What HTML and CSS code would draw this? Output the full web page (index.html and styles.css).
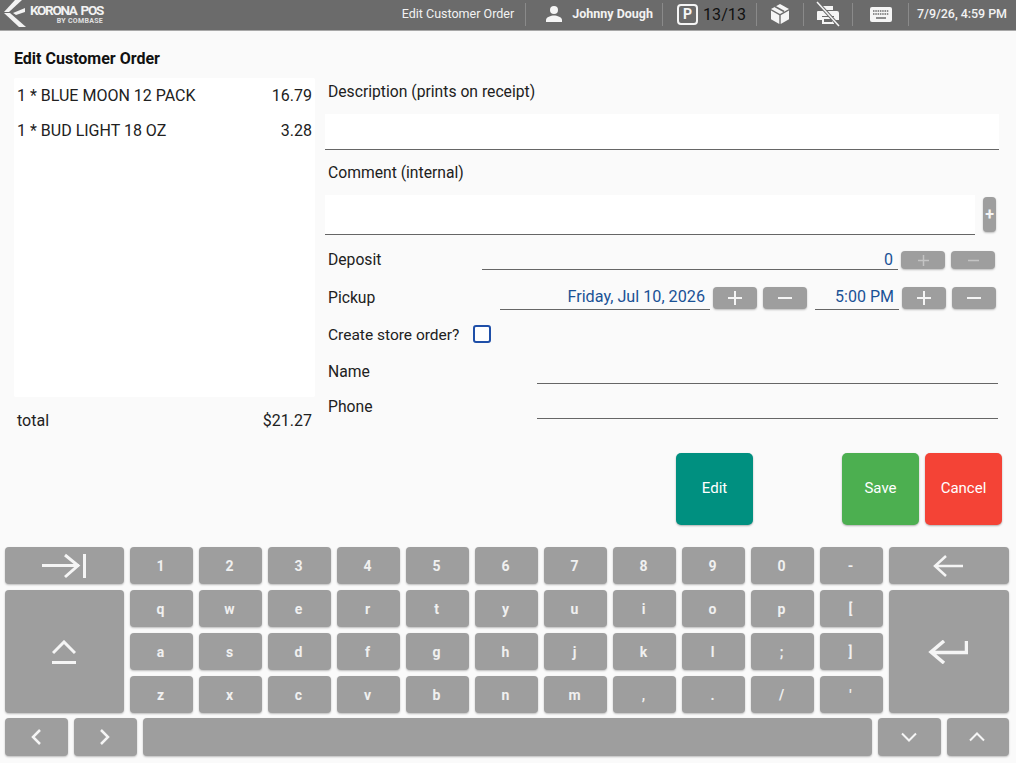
FILE: index.html
```html
<!DOCTYPE html>
<html lang="en">
<head>
<meta charset="utf-8">
<title>Edit Customer Order</title>
<link rel="stylesheet" href="styles.css">
</head>
<body>
<header class="topbar">
  <div class="logo">
    <svg class="logo-mark" width="28" height="28" viewBox="0 0 28 28"><path d="M15 0h7L9 12H4z" fill="#f2f2f2"/><path d="M4 13h6l16 14h-7z" fill="#f2f2f2"/><path d="M25 8v4l-9 3-3-2z" fill="#f2f2f2"/></svg>
    <div class="logo-text"><span class="logo-name">KORONA POS</span><span class="logo-sub">BY COMBASE</span></div>
  </div>
  <div class="top-items">
    <div class="top-item top-title"><span class="top-text">Edit Customer Order</span></div>
    <div class="top-item top-user">
      <svg width="18" height="18" viewBox="0 0 18 18"><circle cx="9" cy="5" r="4" fill="#f5f5f5"/><path d="M1 17v-2c0-3 5-4.500 8-4.500s8 1.500 8 4.500v2z" fill="#f5f5f5"/></svg>
      <span class="top-text user-name">Johnny Dough</span>
    </div>
    <div class="top-item top-park">
      <span class="park-icon">P</span>
      <span class="park-count">13/13</span>
    </div>
    <div class="top-item top-icon box-item">
      <svg width="20" height="22" viewBox="0 0 20 22"><path d="M10 1l9 5-9 5-9-5z" fill="#f5f5f5"/><path d="M1 7.500l8.300 4.700V21L1 16.300z" fill="#f5f5f5"/><path d="M10.700 12.200L19 7.500v8.800L10.700 21z" fill="#f5f5f5"/><path d="M5 3.500l9 5" stroke="#6b6b6b" stroke-width="1.500"/></svg>
    </div>
    <div class="top-item top-icon print-item">
      <svg width="24" height="26" viewBox="0 0 24 26"><path d="M6 5h11v4H6z" fill="#f5f5f5"/><path d="M2 10h19a2 2 0 0 1 2 2v7h-5v-4H6v4H1v-8a1 1 0 0 1 1-1z" fill="#f5f5f5"/><path d="M6 16h12v7H6z" fill="#f5f5f5"/><path d="M8 18h8v3H8z" fill="#6b6b6b"/><path d="M1 1l22 24" stroke="#6b6b6b" stroke-width="3.500"/><path d="M1 1l22 24" stroke="#f5f5f5" stroke-width="1.500"/></svg>
    </div>
    <div class="top-item top-icon kb-item">
      <svg width="22" height="15" viewBox="0 0 22 15"><rect width="22" height="15" rx="2" fill="#f5f5f5"/><path d="M3 4h16M3 7h16" stroke="#6b6b6b" stroke-width="1.500" stroke-dasharray="1.500 .8"/><path d="M6 11h10" stroke="#6b6b6b" stroke-width="1.500"/></svg>
    </div>
    <div class="top-item top-date"><span class="top-text">7/9/26, 4:59 PM</span></div>
  </div>
</header>

<main class="content">
  <div class="columns">
    <section class="order">
      <h1 class="order-title">Edit Customer Order</h1>
      <div class="order-list">
        <div class="order-row"><span>1 * BLUE MOON 12 PACK</span><span>16.79</span></div>
        <div class="order-row"><span>1 * BUD LIGHT 18 OZ</span><span>3.28</span></div>
      </div>
      <div class="order-total"><span>total</span><span>$21.27</span></div>
    </section>

    <section class="form">
      <div class="label label-first">Description (prints on receipt)</div>
      <div class="input input-desc"></div>
      <div class="label label-comment">Comment (internal)</div>
      <div class="comment-row">
        <div class="input input-comment"></div>
        <button class="btn btn-add">+</button>
      </div>
      <div class="row row-deposit">
        <span class="row-label label-deposit">Deposit</span>
        <span class="field field-deposit">0</span>
        <button class="btn btn-step btn-dim"><svg width="13" height="13" viewBox="0 0 13 13"><path d="M1 6.500h11M6.500 1v11" class="glyph-dim"/></svg></button>
        <button class="btn btn-step btn-dim"><svg width="13" height="13" viewBox="0 0 13 13"><path d="M1 6.500h11" class="glyph-dim"/></svg></button>
      </div>
      <div class="row row-pickup">
        <span class="row-label label-pickup">Pickup</span>
        <span class="field field-date">Friday, Jul 10, 2026</span>
        <button class="btn btn-step"><svg width="16" height="16" viewBox="0 0 16 16"><path d="M1 8h14M8 1v14" class="glyph"/></svg></button>
        <button class="btn btn-step"><svg width="16" height="16" viewBox="0 0 16 16"><path d="M1 8h14" class="glyph"/></svg></button>
        <span class="field field-time">5:00 PM</span>
        <button class="btn btn-step"><svg width="16" height="16" viewBox="0 0 16 16"><path d="M1 8h14M8 1v14" class="glyph"/></svg></button>
        <button class="btn btn-step"><svg width="16" height="16" viewBox="0 0 16 16"><path d="M1 8h14" class="glyph"/></svg></button>
      </div>
      <div class="row row-store">
        <span class="row-label label-store">Create store order?</span>
        <span class="checkbox"></span>
      </div>
      <div class="row row-name">
        <span class="row-label label-contact">Name</span>
        <span class="field field-contact"></span>
      </div>
      <div class="row row-phone">
        <span class="row-label label-contact">Phone</span>
        <span class="field field-contact"></span>
      </div>
    </section>
  </div>

  <div class="actions">
    <button class="action action-edit">Edit</button>
    <button class="action action-save">Save</button>
    <button class="action action-cancel">Cancel</button>
  </div>

  <div class="keyboard">
    <div class="key-grid">
      <button class="key key-tab"><svg width="46" height="26" viewBox="0 0 46 26"><path d="M0 12.500h37M23 2l13 10.500L23 24M42.500 1v24" class="kicon3"/></svg></button>
      <button class="key">1</button><button class="key">2</button><button class="key">3</button><button class="key">4</button><button class="key">5</button><button class="key">6</button><button class="key">7</button><button class="key">8</button><button class="key">9</button><button class="key">0</button><button class="key">-</button>
      <button class="key"><svg width="30" height="22" viewBox="0 0 30 22"><path d="M30 11H2M13 1L2 11l11 10" class="kicon"/></svg></button>

      <button class="key key-shift"><svg width="24" height="24" viewBox="0 0 24 24"><path d="M1 13L12 2l11 11" class="kicon3"/><path d="M0 22.500h24" class="kicon3"/></svg></button>
      <button class="key">q</button><button class="key">w</button><button class="key">e</button><button class="key">r</button><button class="key">t</button><button class="key">y</button><button class="key">u</button><button class="key">i</button><button class="key">o</button><button class="key">p</button><button class="key">[</button>
      <button class="key key-enter"><svg width="40" height="24" viewBox="0 0 40 24"><path d="M38.500 1v11.500H3M16 1L3 12l13 11" class="kicon-heavy"/></svg></button>

      <button class="key">a</button><button class="key">s</button><button class="key">d</button><button class="key">f</button><button class="key">g</button><button class="key">h</button><button class="key">j</button><button class="key">k</button><button class="key">l</button><button class="key">;</button><button class="key">]</button>

      <button class="key">z</button><button class="key">x</button><button class="key">c</button><button class="key">v</button><button class="key">b</button><button class="key">n</button><button class="key">m</button><button class="key">,</button><button class="key">.</button><button class="key">/</button><button class="key">'</button>
    </div>
    <div class="key-row">
      <button class="key key-small"><svg width="10" height="16" viewBox="0 0 10 16"><path d="M9 1L2 8l7 7" class="kicon"/></svg></button>
      <button class="key key-small"><svg width="10" height="16" viewBox="0 0 10 16"><path d="M1 1l7 7-7 7" class="kicon"/></svg></button>
      <button class="key key-space"></button>
      <button class="key key-small"><svg width="16" height="10" viewBox="0 0 16 10"><path d="M1 1.500l7 7 7-7" class="kicon-thin"/></svg></button>
      <button class="key key-last"><svg width="16" height="10" viewBox="0 0 16 10"><path d="M1 8.500l7-7 7 7" class="kicon-thin"/></svg></button>
    </div>
  </div>
</main>
</body>
</html>
```
FILE: styles.css
```css
* { box-sizing: border-box; }
html, body { margin: 0; padding: 0; }
body {
  width: 1016px;
  height: 763px;
  overflow: hidden;
  background: #fafafa;
  color: #212121;
  font-family: Roboto, "Liberation Sans", sans-serif;
  font-size: 16px;
}
button { font-family: inherit; border: 0; padding: 0; margin: 0; }

.topbar {
  height: 31px;
  background: #6b6b6b;
  border-bottom: 1px solid #a8a8a8;
  display: flex;
  justify-content: space-between;
  align-items: stretch;
  color: #f2f2f2;
  font-size: 12.500px;
}
.logo { display: flex; align-items: flex-start; }
.logo-mark { display: block; }
.logo-text { display: flex; flex-direction: column; align-items: flex-end; padding: 3px 0 0 2px; }
.logo-name { font-weight: 700; font-size: 13.500px; line-height: 15px; letter-spacing: -1.300px; word-spacing: 2px; color: #f2f2f2; }
.logo-sub { font-weight: 700; font-size: 7px; line-height: 7px; letter-spacing: .3px; color: #e0e0e0; }

.top-items { display: flex; align-items: center; padding: 0 9px 2px 0; }
.top-item {
  display: flex;
  align-items: center;
  height: 23px;
  border-right: 1px solid #8a8a8a;
}
.top-text { padding-bottom: 2px; }
.top-title { padding-right: 11px; }
.top-user { padding-left: 19px; padding-right: 9px; gap: 9px; }
.user-name { font-weight: 700; }
.top-park { padding-left: 14px; padding-right: 10px; gap: 5px; }
.park-icon {
  width: 21px;
  height: 21px;
  border: 2.500px solid #f5f5f5;
  border-radius: 4px;
  background: #6b6b6b;
  color: #f5f5f5;
  font-weight: 700;
  font-size: 14px;
  line-height: 16px;
  text-align: center;
}
.park-count { font-size: 16px; color: #111; letter-spacing: .1px; }
.top-icon { justify-content: center; }
.box-item { width: 47px; }
.print-item { width: 49px; }
.kb-item { width: 56px; }
.top-date { border-right: 0; padding-left: 8px; font-weight: 500; letter-spacing: -.05px; }

.columns { display: flex; align-items: flex-start; height: 399px; }
.order { width: 301px; margin-left: 14px; padding-top: 18px; }
.order-title { margin: 0 0 9px; font-size: 16px; line-height: 20px; font-weight: 700; color: #111; }
.order-list { height: 319px; background: #fff; border-radius: 2px; }
.order-row { display: flex; justify-content: space-between; height: 35px; padding: 0 3px; line-height: 35px; }
.order-total { display: flex; justify-content: space-between; margin-top: 14px; padding: 0 3px; line-height: 20px; }

.form { width: 674px; margin-left: 10px; padding-top: 51px; }
.label { padding-left: 3px; line-height: 20px; font-size: 15.700px; }
.label-comment { margin-top: 13px; }
.input { background: #fff; border-bottom: 1px solid #666; }
.input-desc { margin-top: 12px; height: 36px; }
.comment-row { display: flex; margin-top: 12px; gap: 8px; align-items: flex-start; }
.input-comment { width: 650px; height: 40px; }
.btn { background: #9e9e9e; border-radius: 4px; color: #f5f5f5; box-shadow: 0 1px 2px rgba(0,0,0,.25); display: flex; align-items: center; justify-content: center; }
.btn-add { width: 13px; height: 35px; margin-top: 2px; font-size: 16px; font-weight: 700; }
.row { display: flex; padding-left: 3px; align-items: flex-start; line-height: 20px; }
.row-label { display: block; font-size: 15.700px; }
.row-deposit { margin-top: 16px; height: 19px; }
.row-pickup { margin-top: 16px; height: 24px; padding-top: 1px; }
.row-store { margin-top: 14px; height: 20px; align-items: center; }
.row-name { margin-top: 17px; height: 23px; }
.row-phone { margin-top: 12px; height: 23px; }
.label-deposit { width: 154px; margin-top: -1px; }
.label-pickup { width: 172px; padding-top: 1px; }
.label-store { font-size: 15.500px; padding-top: 2px; }
.label-contact { width: 209px; padding-top: 1px; }
.field { display: block; border-bottom: 1px solid #666; color: #1a5296; text-align: right; padding-right: 5px; }
.field-deposit { width: 416px; height: 19px; line-height: 17px; margin-right: 3px; }
.field-date { width: 210px; height: 23px; margin-right: 3px; font-size: 16.200px; }
.field-time { width: 84px; height: 23px; margin: 0 3px 0 8px; }
.field-contact { width: 461px; height: 23px; }
.row-deposit .btn + .btn, .row-pickup .btn + .btn { margin-left: 6px; }
.btn-step { width: 44px; height: 22px; }
.btn-dim { height: 18px; }
.glyph { stroke: #f5f5f5; stroke-width: 2; fill: none; }
.glyph-dim { stroke: #c4c4c4; stroke-width: 1.500; fill: none; }
.checkbox { width: 18px; height: 18px; margin-left: 14px; border: 2px solid #1f4fa8; border-radius: 3px; background: #fff; }

.actions { display: flex; justify-content: flex-end; gap: 6px; margin-top: 23px; padding-right: 14px; }
.action { width: 77px; height: 72px; padding-bottom: 2px; border-radius: 5px; color: #fff; font-size: 15px; box-shadow: 0 1px 2px rgba(0,0,0,.3); }
.action-edit { background: #009080; margin-right: 83px; }
.action-save { background: #4caf50; }
.action-cancel { background: #f44336; }

.keyboard { margin-top: 22px; padding: 0 7px 0 5px; }
.key-grid {
  display: grid;
  grid-template-columns: 119px repeat(11, 63px) 120px;
  grid-auto-rows: 37px;
  gap: 6px;
}
.key {
  background: #9e9e9e;
  border-radius: 4px;
  box-shadow: 0 1px 2px rgba(0,0,0,.25);
  color: #f0f0f0;
  font-size: 14px;
  font-weight: 700;
  display: flex;
  align-items: center;
  justify-content: center;
  padding-right: 2px;
}
.key-tab { padding-right: 0; }
.key-shift { grid-column: 1; grid-row: 2 / span 3; }
.key-enter { grid-column: 13; grid-row: 2 / span 3; }
.key-row { display: flex; gap: 6px; margin-top: 5px; }
.key-row .key { height: 38px; }
.key-small { width: 63px; }
.key-last { width: 62px; }
.key-space { width: 729px; }
.kicon { stroke: #f5f5f5; stroke-width: 2.500; fill: none; }
.kicon-thin { stroke: #f5f5f5; stroke-width: 2; fill: none; }
.kicon3 { stroke: #f5f5f5; stroke-width: 3; fill: none; }
.kicon-heavy { stroke: #f5f5f5; stroke-width: 3.500; fill: none; }
```
